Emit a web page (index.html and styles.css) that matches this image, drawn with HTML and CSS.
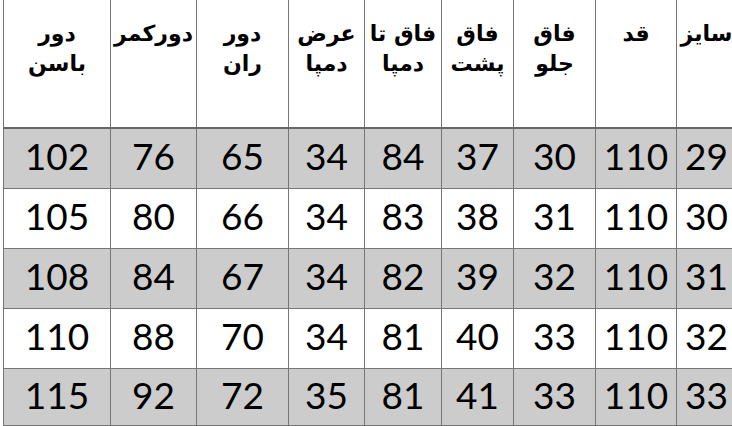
FILE: index.html
```html
<!DOCTYPE html>
<html lang="fa">
<head>
<meta charset="utf-8">
<title>جدول سایز</title>
<link rel="stylesheet" href="styles.css">
</head>
<body>
<table class="size-table" dir="rtl">
  <colgroup>
    <col class="c-size">
    <col class="c-qad">
    <col class="c-front">
    <col class="c-back">
    <col class="c-rise">
    <col class="c-hem">
    <col class="c-thigh">
    <col class="c-waist">
    <col class="c-hip">
  </colgroup>
  <thead>
    <tr>
      <th><span class="ln">سایز</span></th>
      <th><span class="ln">قد</span></th>
      <th><span class="ln">فاق</span><span class="ln">جلو</span></th>
      <th><span class="ln">فاق</span><span class="ln">پشت</span></th>
      <th><span class="ln">فاق تا</span><span class="ln">دمپا</span></th>
      <th><span class="ln">عرض</span><span class="ln">دمپا</span></th>
      <th><span class="ln">دور</span><span class="ln">ران</span></th>
      <th><span class="ln">دورکمر</span></th>
      <th><span class="ln">دور</span><span class="ln">باسن</span></th>
    </tr>
  </thead>
  <tbody>
    <tr class="shade"><td>29</td><td>110</td><td>30</td><td>37</td><td>84</td><td>34</td><td>65</td><td>76</td><td>102</td></tr>
    <tr><td>30</td><td>110</td><td>31</td><td>38</td><td>83</td><td>34</td><td>66</td><td>80</td><td>105</td></tr>
    <tr class="shade"><td>31</td><td>110</td><td>32</td><td>39</td><td>82</td><td>34</td><td>67</td><td>84</td><td>108</td></tr>
    <tr><td>32</td><td>110</td><td>33</td><td>40</td><td>81</td><td>34</td><td>70</td><td>88</td><td>110</td></tr>
    <tr class="shade last"><td>33</td><td>110</td><td>33</td><td>41</td><td>81</td><td>35</td><td>72</td><td>92</td><td>115</td></tr>
  </tbody>
</table>
</body>
</html>
```
FILE: styles.css
```css
html, body {
  margin: 0;
  padding: 0;
  background: #ffffff;
  overflow: hidden;
}

body {
  width: 732px;
  height: 426px;
}

.size-table {
  margin-left: 3px;
  width: 734px;
  table-layout: fixed;
  border-collapse: collapse;
  color: #000000;
}

.c-size { width: 60px; }
.c-qad { width: 81px; }
.c-front { width: 82px; }
.c-back { width: 72px; }
.c-rise { width: 77px; }
.c-hem { width: 76px; }
.c-thigh { width: 92px; }
.c-waist { width: 86px; }
.c-hip { width: 107px; }

.size-table th,
.size-table td {
  border-left: 1px solid #767676;
  border-right: 1px solid #767676;
  text-align: center;
  padding: 0;
}

.size-table th {
  height: 128px;
  vertical-align: top;
  padding-top: 19px;
  font-family: "DejaVu Sans", sans-serif;
  font-weight: bold;
  font-size: 22px;
  line-height: 30px;
  border-bottom: 2px solid #666666;
  box-sizing: border-box;
}

.ln {
  display: block;
  height: 30px;
}

.size-table td {
  height: 60px;
  border-bottom: 1px solid #767676;
  font-family: Lato, sans-serif;
  font-size: 37px;
  line-height: 46px;
  vertical-align: middle;
  padding-bottom: 4px;
  box-sizing: border-box;
}

.size-table tr.shade td {
  background: #cccccc;
}

.size-table tr.last td {
  height: 57px;
}
```
